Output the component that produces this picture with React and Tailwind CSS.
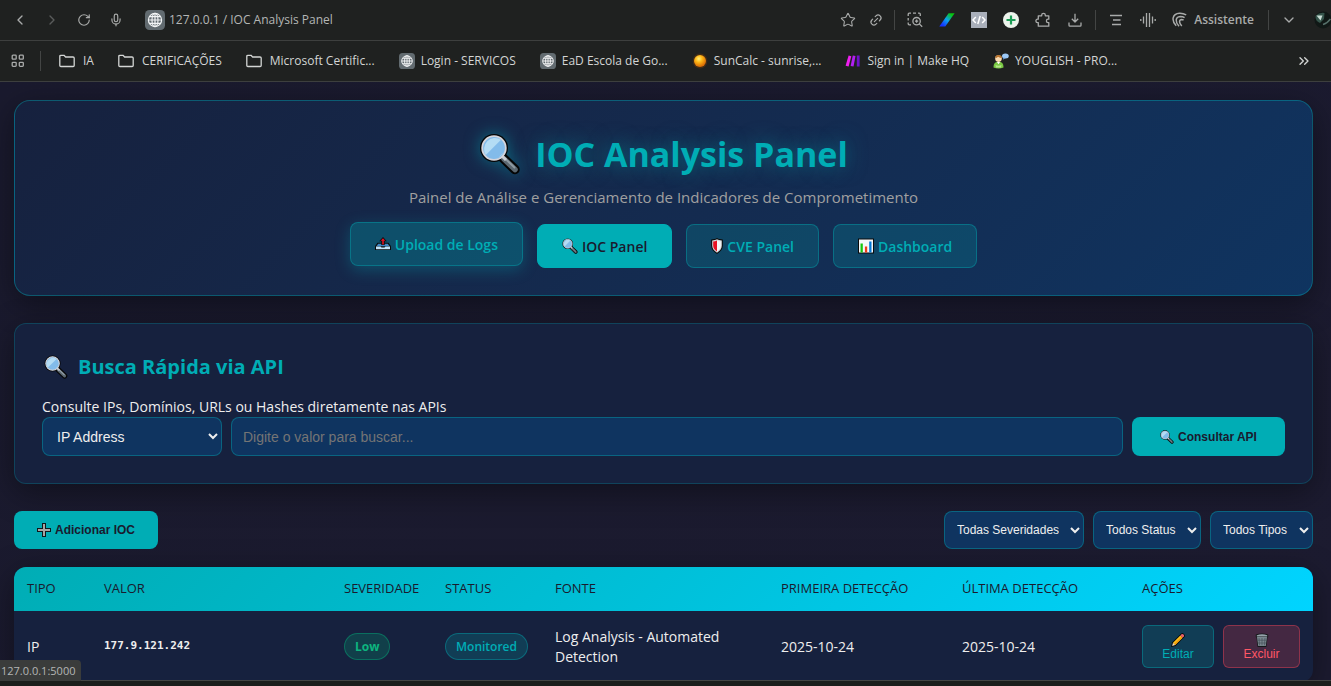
import React from "react";
import {
  ChevronLeft, ChevronRight, ChevronDown, ChevronsRight, RotateCw, Mic, Star, Link2,
} from "lucide-react";

/* ---------- Drawn icons ---------- */

function Magnifier({ className }) {
  return (
    <svg viewBox="0 0 42 42" className={className} aria-hidden="true">
      <path d="M24 25l12 11.500" stroke="#050505" strokeWidth="9.500" strokeLinecap="round" />
      <circle cx="15" cy="15" r="14" fill="#050505" />
      <path d="M25 26l11 10.500" stroke="#5b6770" strokeWidth="5.500" strokeLinecap="round" />
      <path d="M24.500 24l11 10.500" stroke="#8e9aa2" strokeWidth="2" strokeLinecap="round" />
      <path d="M22 22l5 5" stroke="#c9ccd2" strokeWidth="3" />
      <circle cx="15" cy="15" r="11.800" fill="#82bbea" stroke="#d5d5dc" strokeWidth="1.800" />
      <path d="M6.800 22A11 11 0 0 1 22 6.800z" fill="#b4dcf4" />
      <path d="M19 24.800l5.800-5.800a11 11 0 0 1-5.800 5.800z" fill="#a5d1f0" />
    </svg>
  );
}

function Outbox({ className }) {
  return (
    <svg viewBox="0 0 16 16" className={className} aria-hidden="true">
      <path d="M2.500 6.800h11l2.500 3.400v3.900H0v-3.900z" fill="#0a0a0a" />
      <path d="M3.200 7.800h9.600l1.800 2.400H1.400z" fill="#3f86c4" />
      <path d="M1 10.400h4.500l1 1.200h3l1-1.200H15v2.800H1z" fill="#bfe3fa" />
      <path d="M8 1L4.200 5.200h2.100V9h3.400V5.200h2.100z" fill="#0a0a0a" />
      <path d="M8 2.200L5.600 4.700h1.600v3.900h1.600V4.700h1.600z" fill="#e01227" />
    </svg>
  );
}

function Shield({ className }) {
  return (
    <svg viewBox="2 0 12 16" className={className} aria-hidden="true">
      <path d="M8 0C6.400 1 4.500 1.300 2.200 1.400v6.400c0 3.400 2.500 6.200 5.800 8.200 3.300-2 5.800-4.800 5.800-8.200V1.400C11.500 1.300 9.600 1 8 0z" fill="#0a0a0a" />
      <path d="M8 1.200c-1.400.8-3 1.100-4.800 1.200v5.400c0 2.800 2 5.200 4.800 7 2.800-1.800 4.800-4.200 4.800-7V2.400C11 2.300 9.400 2 8 1.200z" fill="#d8dadd" />
      <path d="M8 2.400c-1.200.6-2.400.9-3.800 1v4.400c0 2.300 1.600 4.200 3.800 5.700z" fill="#e81224" />
      <path d="M8 2.400c1.200.6 2.400.9 3.800 1v4.400c0 2.300-1.600 4.200-3.800 5.700z" fill="#f7f7f7" />
    </svg>
  );
}

function Bars({ className }) {
  return (
    <svg viewBox="0 0 16 16" className={className} aria-hidden="true">
      <path d="M0 .5h16v15H0z" fill="#0a0a0a" />
      <path d="M1 1.500h14v13H1z" fill="#f4f6f8" />
      <path d="M2.500 5.500h2.300v9H2.500z" fill="#16c60c" />
      <path d="M6.900 8.500h2.300v6H6.900z" fill="#f03a17" />
      <path d="M11.200 3.500h2.300v11h-2.300z" fill="#0078d7" />
    </svg>
  );
}

function Plus({ className }) {
  return (
    <svg viewBox="0 0 14 14" className={className} aria-hidden="true">
      <path d="M5 0h4v5h5v4H9v5H5V9H0V5h5z" fill="#10181c" />
      <path d="M6 1h2v5h5v2H8v5H6V8H1V6h5z" fill="#a9a5a3" />
    </svg>
  );
}

function Pencil({ className }) {
  return (
    <svg viewBox="0 0 14 14" className={className} aria-hidden="true">
      <path d="M0 14l1-4.500L10.200.4Q11.500-.5 13 1t.6 2.800L4.500 13z" fill="#0a0a0a" />
      <path d="M2 9.800L9.300 2.500l2.200 2.200L4.200 12z" fill="#ffc21a" />
      <path d="M3.100 10.900l7.300-7.300 1.100 1.100L4.200 12z" fill="#f09a0c" />
      <path d="M9.300 2.500l1.500-1.400q.8-.5 1.700.4t.4 1.700l-1.400 1.500z" fill="#e8606a" />
      <path d="M2 9.800L4.200 12l-3 .9z" fill="#f6dcb4" />
    </svg>
  );
}

function Trash({ className }) {
  return (
    <svg viewBox="0 0 14 14" className={className} aria-hidden="true">
      <path d="M.8 1.600Q7-.8 13.200 1.600v2.600h-.6L11.400 14H2.600L1.400 4.200H.8z" fill="#15181a" />
      <path d="M2 4h10l-1.200 9.100H3.200z" fill="#78868e" />
      <path d="M1.800 2.200Q7 .4 12.200 2.200v1.200H1.800z" fill="#94a2aa" />
      <path d="M4 5l.6 7.400M7 5v7.400M10 5l-.6 7.400M2.600 7.200h8.800M3 10h8" stroke="#46525a" strokeWidth=".7" fill="none" />
    </svg>
  );
}

function Globe({ className }) {
  return (
    <svg viewBox="0 0 20 20" className={className} aria-hidden="true">
      <rect width="20" height="20" rx="4.500" fill="#626b70" />
      <g fill="none" stroke="#f2f4f5" strokeWidth="1.200">
        <circle cx="10" cy="10" r="6.600" />
        <ellipse cx="10" cy="10" rx="3" ry="6.600" />
        <path d="M10 3.400v13.200M3.400 10h13.200M4.600 6.600h10.800M4.600 13.400h10.800" />
      </g>
    </svg>
  );
}

function Folder({ className }) {
  return (
    <svg viewBox="0 0 16 16" className={className} fill="none" stroke="currentColor" strokeWidth="1.300" aria-hidden="true">
      <path d="M.8 3.400Q.8 2.300 1.900 2.300H5l1.600 1.700h7.400q1.200 0 1.200 1.100v7.300q0 1.100-1.100 1.100H1.900q-1.100 0-1.100-1.100z" strokeLinejoin="round" />
    </svg>
  );
}

function Sun({ className }) {
  return (
    <svg viewBox="0 0 16 16" className={className} aria-hidden="true">
      <defs>
        <radialGradient id="sun" cx=".4" cy=".32" r=".65">
          <stop offset="0" stopColor="#fff07a" />
          <stop offset=".45" stopColor="#fdb515" />
          <stop offset="1" stopColor="#d96c06" />
        </radialGradient>
      </defs>
      <circle cx="8" cy="8" r="7.400" fill="#7a3f08" opacity=".4" />
      <circle cx="8" cy="8" r="6" fill="url(#sun)" />
    </svg>
  );
}

function Make({ className }) {
  return (
    <svg viewBox="0 0 16 16" className={className} aria-hidden="true">
      <path d="M3.600 2.600l2.700.6L3.600 13.400.6 12.800z" fill="#f01ff0" />
      <path d="M7.800 2.600l2.700.4-2 10.400-2.900-.5z" fill="#b21ff2" />
      <path d="M11.800 2.500h2.800v11h-2.800z" fill="#6d12c9" />
    </svg>
  );
}

function Speaker({ className }) {
  return (
    <svg viewBox="0 0 16 16" className={className} aria-hidden="true">
      <path d="M.5 14.500Q.3 8.800 5.500 8.800t5 5.700q-5 1.800-10 0z" fill="#7ac943" />
      <path d="M2.500 12q3 1.400 6 0l-.6 2.600H3z" fill="#b5e68a" />
      <path d="M3.700 8.800h3.600l-1.800 2.400z" fill="#fff" />
      <circle cx="5.500" cy="5.600" r="3.300" fill="#f8d9b0" />
      <path d="M2.200 5.200q.2-3.200 3.300-3.200t3.300 3.200Q6 4.600 5 3.800 4 5 2.200 5.200z" fill="#b7722c" />
      <ellipse cx="12.400" cy="2.900" rx="3.400" ry="2.500" fill="#9cc8f5" />
      <path d="M10.400 4.500l-.4 2.200 2.600-1.600z" fill="#6ea6e3" />
    </svg>
  );
}

function Apps({ className }) {
  return (
    <svg viewBox="0 0 14 14" className={className} fill="none" stroke="currentColor" strokeWidth="1.300" aria-hidden="true">
      <rect x="1.200" y="1.200" width="4" height="4" rx=".8" />
      <rect x="8.300" y="1.200" width="4" height="4" rx=".8" />
      <rect x="1.200" y="8.300" width="4" height="4" rx=".8" />
      <rect x="8.300" y="8.300" width="4" height="4" rx=".8" />
    </svg>
  );
}

function Capture({ className }) {
  return (
    <svg viewBox="0 0 16 16" className={className} fill="none" stroke="currentColor" strokeWidth="1.300" aria-hidden="true">
      <path d="M1.200 4V2.200q0-1 1-1H4M6 1.200h3M11 1.200h1.300q1 0 1 1V4M1.200 6v2.600M1.200 10.600v1.200q0 1 1 1H4" />
      <circle cx="9.600" cy="9.200" r="3.700" />
      <path d="M12.300 11.900l2.900 2.900M8 9.200h3.200M9.600 7.600v3.200" />
    </svg>
  );
}

function Slash({ className }) {
  return (
    <svg viewBox="0 0 16 16" className={className} aria-hidden="true">
      <defs>
        <linearGradient id="slash" x1="0" y1="1" x2="1" y2="0">
          <stop offset="0.15" stopColor="#1533ff" />
          <stop offset=".5" stopColor="#0aa4f0" />
          <stop offset=".85" stopColor="#08c410" />
        </linearGradient>
      </defs>
      <path d="M.3 14.500L9.600 1.300h6L6.300 14.500z" fill="url(#slash)" />
    </svg>
  );
}

function CodeBox({ className }) {
  return (
    <svg viewBox="0 0 16 16" className={className} aria-hidden="true">
      <path d="M0 0h16v16H0z" fill="#a9afba" />
      <path d="M4.800 5L2 8l2.800 3M11.200 5L14 8l-2.800 3M9.200 4L6.800 12" fill="none" stroke="#fff" strokeWidth="1.500" />
    </svg>
  );
}

function AddCircle({ className }) {
  return (
    <svg viewBox="0 0 16 16" className={className} aria-hidden="true">
      <circle cx="8" cy="8" r="8" fill="#edf4ec" />
      <path d="M8 3.500v9M3.500 8h9" stroke="#1d9d57" strokeWidth="2.200" />
    </svg>
  );
}

function Puzzle({ className }) {
  return (
    <svg viewBox="0 0 16 16" className={className} fill="none" stroke="currentColor" strokeWidth="1.300" strokeLinejoin="round" aria-hidden="true">
      <path d="M3.300 3.800h3.400V3.100a1.800 1.800 0 0 1 3.600 0v.7h3.500v3.400h-.7a1.700 1.700 0 0 0 0 3.400h.7v3.600H3.300v-3.600H2.600a1.700 1.700 0 0 1 0-3.400h.7z" />
    </svg>
  );
}

function DownloadTray({ className }) {
  return (
    <svg viewBox="0 0 14 14" className={className} fill="none" stroke="currentColor" strokeWidth="1.300" strokeLinejoin="round" aria-hidden="true">
      <path d="M7 .8v8M3.800 5.800L7 9l3.200-3.200M1 9.500v2.800q0 .9.900.9h10.200q.9 0 .9-.9V9.500" />
    </svg>
  );
}

function Lines({ className }) {
  return (
    <svg viewBox="0 0 14 14" className={className} stroke="currentColor" strokeWidth="1.300" aria-hidden="true">
      <path d="M1 2.500h12M4 7h7.500M3 11.500h9" />
    </svg>
  );
}

function Wave({ className }) {
  return (
    <svg viewBox="0 0 16 16" className={className} stroke="currentColor" strokeWidth="1.300" aria-hidden="true">
      <path d="M.8 7v2M3.500 4.500v7M6.500 1v14M9.500 1v14M12.500 4.500v7M15.200 7v2" />
    </svg>
  );
}

function Assist({ className }) {
  return (
    <svg viewBox="0 0 16 16" className={className} fill="none" stroke="currentColor" strokeWidth="1.500" aria-hidden="true">
      <path d="M4.200 13.800C-.6 9-.2 1.800 7.600 1.300q3.600-.1 6.600 1.600" />
      <path d="M7 14.200C3 10 3.200 4.800 8.200 4.400q2.600 0 4.400 1.200" />
      <path d="M9.800 14C7 11.200 6.800 8 9.400 7.500q1.200 0 2.200.7" />
    </svg>
  );
}

function Avatar({ className }) {
  return (
    <svg viewBox="0 0 20 20" className={className} aria-hidden="true">
      <circle cx="10" cy="10" r="8.500" fill="#101816" />
      <path d="M2.500 6q4-4 9-3L11 9l-4 4Q2 11 2.500 6z" fill="#35544b" />
      <path d="M3.500 5.500h6L7.500 10.500z" fill="#c9ddd5" />
      <path d="M10 14.500q4-1 7.500-5.500" stroke="#56706a" strokeWidth="1.500" fill="none" />
    </svg>
  );
}

/* ---------- Browser frame ---------- */

function BarButton({ label, narrow, children }) {
  return (
    <button type="button" aria-label={label} className={narrow ? "flex h-8 w-7 shrink-0 items-center justify-center" : "flex h-8 w-8 shrink-0 items-center justify-center"}>
      {children}
    </button>
  );
}

function Divider() {
  return <span className="mx-1 h-5 w-px shrink-0 bg-[#434544]" />;
}

function AddressBar() {
  return (
    <div className="flex h-10 shrink-0 items-center overflow-hidden pl-1 text-[#a9abaa]">
      <BarButton label="Voltar"><ChevronLeft className="size-4" /></BarButton>
      <BarButton label="Avançar"><ChevronRight className="size-4 text-[#5a5c5b]" /></BarButton>
      <BarButton label="Recarregar"><RotateCw className="size-3.5" /></BarButton>
      <BarButton label="Pesquisa por voz"><Mic className="size-3.5" /></BarButton>
      <Globe className="ml-[13px] size-5 shrink-0" />
      <span className="ml-1 text-[12px] whitespace-nowrap text-[#b4b6b5]">127.0.0.1 / IOC Analysis Panel</span>
      <div className="ml-auto flex items-center">
        <BarButton label="Favoritar" narrow><Star className="size-4" strokeWidth={1.6} /></BarButton>
        <BarButton label="Copiar link" narrow><Link2 className="size-3.5 -rotate-45" /></BarButton>
        <Divider />
        <BarButton label="Capturar"><Capture className="size-4" /></BarButton>
        <BarButton label="Extensão de cores"><Slash className="size-4" /></BarButton>
        <BarButton label="Extensão de código"><CodeBox className="size-4" /></BarButton>
        <BarButton label="Adicionar"><AddCircle className="size-4" /></BarButton>
        <BarButton label="Extensões"><Puzzle className="size-4" /></BarButton>
        <BarButton label="Downloads"><DownloadTray className="size-3.5" /></BarButton>
        <Divider />
        <BarButton label="Resumo"><Lines className="size-3.5" /></BarButton>
        <BarButton label="Voz"><Wave className="size-4" /></BarButton>
        <button type="button" className="ml-2 flex shrink-0 items-center gap-1.5 text-[12px] font-semibold">
          <Assist className="size-4" />
          Assistente
        </button>
        <span className="ml-3.5 h-5 w-px shrink-0 bg-[#434544]" />
        <button type="button" aria-label="Mais" className="ml-3 shrink-0"><ChevronDown className="size-4" /></button>
        <button type="button" aria-label="Perfil" className="ml-4 flex w-[18px] shrink-0 overflow-hidden"><Avatar className="size-5 shrink-0" /></button>
      </div>
    </div>
  );
}

const bookmarks = [
  { label: "IA", icon: Folder, folder: true },
  { label: "CERIFICAÇÕES", icon: Folder, folder: true },
  { label: "Microsoft Certific...", icon: Folder, folder: true },
  { label: "Login - SERVICOS", icon: Globe },
  { label: "EaD Escola de Go...", icon: Globe },
  { label: "SunCalc - sunrise,...", icon: Sun },
  { label: "Sign in | Make HQ", icon: Make },
  { label: "YOUGLISH - PRO...", icon: Speaker },
];

function BookmarkBar() {
  return (
    <nav aria-label="Favoritos" className="flex h-[42px] shrink-0 items-center border-y border-[#3d3f3e] pr-3 pl-[11px] text-[12px] text-[#d3d5d4]">
      <button type="button" aria-label="Aplicativos"><Apps className="size-3.5 text-[#a9abaa]" /></button>
      <span className="mr-[18px] ml-[15px] h-5 w-px bg-[#434544]" />
      <div className="flex items-center gap-6">
        {bookmarks.map(({ label, icon: Icon, folder }) => (
          <a key={label} href="#" className={folder ? "flex items-center gap-2 whitespace-nowrap" : "flex items-center gap-1.5 whitespace-nowrap"}>
            <Icon className="size-4 shrink-0" />
            {label}
          </a>
        ))}
      </div>
      <button type="button" aria-label="Mais favoritos" className="mr-[7px] ml-auto"><ChevronsRight className="size-4" /></button>
    </nav>
  );
}

/* ---------- Page ---------- */

const navBase = "flex h-11 items-center gap-1 rounded-lg border px-6 text-[14px] font-semibold whitespace-nowrap";

function Hero() {
  return (
    <header className="rounded-2xl border border-[#00adb5]/40 bg-linear-135 from-[#16213e] to-[#0f3460] px-7 pt-7 pb-[27px] shadow-[0_8px_32px_rgba(0,0,0,0.4)]">
      <h1 className="flex items-center justify-center gap-3.5 text-[34px] leading-[50px] font-bold text-[#00adb5] [text-shadow:0_0_20px_rgba(0,173,181,0.5)]">
        <Magnifier className="size-[42px] drop-shadow-[0_0_8px_rgba(0,173,181,0.5)]" />
        IOC Analysis Panel
      </h1>
      <p className="mt-2 text-center text-[15px] leading-5 text-[#a0a0a0]">
        Painel de Análise e Gerenciamento de Indicadores de Comprometimento
      </p>
      <nav className="mt-[17px] flex justify-center gap-3.5">
        <a href="#" className={navBase + " -translate-y-0.5 border-[#00adb5]/40 bg-[#00adb5]/30 text-[#00adb5] shadow-[0_4px_15px_rgba(0,173,181,0.3)]"}>
          <Outbox className="size-4" />Upload de Logs
        </a>
        <a href="#" aria-current="page" className={navBase + " border-[#00adb5] bg-[#00adb5] text-[#1a1a2e]"}>
          <Magnifier className="size-4" />IOC Panel
        </a>
        <a href="#" className={navBase + " border-[#00adb5]/40 bg-[#00adb5]/20 text-[#00adb5]"}>
          <Shield className="h-4 w-3" />CVE Panel
        </a>
        <a href="#" className={navBase + " border-[#00adb5]/40 bg-[#00adb5]/20 text-[#00adb5]"}>
          <Bars className="size-4" />Dashboard
        </a>
      </nav>
    </header>
  );
}

const control = "rounded-lg border border-[#00adb5]/40 bg-[#0f3460] font-[Liberation_Sans,Arial,sans-serif]";

function QuickSearch() {
  return (
    <section className="mt-[27px] rounded-xl border border-[#00adb5]/25 bg-[#16213e] p-[27px] shadow-[0_8px_32px_rgba(0,0,0,0.4)]">
      <h2 className="flex items-center gap-2 text-[20px] leading-8 font-bold text-[#00adb5]">
        <Magnifier className="mx-0.5 size-6" />
        Busca Rápida via API
      </h2>
      <label htmlFor="query" className="mt-3.5 block text-[14px] leading-5 text-[#eeeeee]">
        Consulte IPs, Domínios, URLs ou Hashes diretamente nas APIs
      </label>
      <div className="flex gap-[9px]">
        <select aria-label="Tipo de consulta" className={control + " h-[39px] w-[180px] px-2.5 text-[14px] text-[#eeeeee]"}>
          <option>IP Address</option>
        </select>
        <input id="query" type="text" placeholder="Digite o valor para buscar..." className={control + " h-[39px] min-w-0 flex-1 px-[11px] text-[14px] text-[#eeeeee] placeholder:text-[#757575]"} />
        <button type="button" className="flex h-[39px] w-[153px] items-center justify-center gap-1 rounded-lg bg-[#00adb5] font-[Liberation_Sans,Arial,sans-serif] text-[12px] font-bold text-[#1a1a2e]">
          <Magnifier className="size-3.5" />Consultar API
        </button>
      </div>
    </section>
  );
}

function Toolbar() {
  return (
    <div className="mt-[27px] flex items-center justify-between">
      <button type="button" className="flex h-[38px] w-36 items-center justify-center gap-1 rounded-lg bg-[#00adb5] font-[Liberation_Sans,Arial,sans-serif] text-[12px] font-bold text-[#1a1a2e]">
        <Plus className="size-3.5" />Adicionar IOC
      </button>
      <div className="flex gap-[9px] text-[12px] text-[#eeeeee]">
        <select aria-label="Severidade" className={control + " h-[38px] w-[140px] px-2"}><option>Todas Severidades</option></select>
        <select aria-label="Status" className={control + " h-[38px] w-[108px] px-2"}><option>Todos Status</option></select>
        <select aria-label="Tipo" className={control + " h-[38px] w-[103px] px-2"}><option>Todos Tipos</option></select>
      </div>
    </div>
  );
}

const columns = ["Tipo", "Valor", "Severidade", "Status", "Fonte", "Primeira Detecção", "Última Detecção", "Ações"];

function IocTable() {
  return (
    <div className="mt-[18px] overflow-hidden rounded-xl bg-[#16213e] shadow-[0_8px_32px_rgba(0,0,0,0.4)]">
      <table className="w-full table-fixed border-collapse text-left text-[14px] text-[#eeeeee]">
        <colgroup>
          <col className="w-[77px]" />
          <col className="w-[240px]" />
          <col className="w-[101px]" />
          <col className="w-[110px]" />
          <col className="w-[226px]" />
          <col className="w-[181px]" />
          <col className="w-[180px]" />
          <col className="w-[184px]" />
        </colgroup>
        <thead className="bg-linear-135 from-[#00adb5] to-[#00d4ff] text-[13px] text-[#1a1a2e] uppercase">
          <tr>
            {columns.map((c) => (
              <th key={c} scope="col" className="h-11 px-[13px] font-medium whitespace-nowrap">{c}</th>
            ))}
          </tr>
        </thead>
        <tbody>
          <tr>
            <td className="h-[71px] px-[13px]">IP</td>
            <td className="px-[13px] font-[DejaVu_Sans_Mono,monospace] text-[11px] font-bold">177.9.121.242</td>
            <td className="px-[13px]">
              <span className="inline-flex h-[27px] items-center rounded-full border border-[#00b87c]/40 bg-[#00b87c]/20 px-2.5 text-[12px] font-bold text-[#0db57f]">Low</span>
            </td>
            <td className="px-[13px]">
              <span className="inline-flex h-[27px] items-center rounded-full border border-[#00adb5]/40 bg-[#00adb5]/20 px-2.5 text-[12px] font-semibold text-[#00adb5]">Monitored</span>
            </td>
            <td className="px-[13px] leading-5">Log Analysis - Automated Detection</td>
            <td className="px-[13px]">2025-10-24</td>
            <td className="px-[13px]">2025-10-24</td>
            <td className="px-[13px]">
              <div className="flex gap-[9px] font-[Liberation_Sans,Arial,sans-serif] text-[12px] leading-3.5">
                <button type="button" className="flex h-[43px] w-[72px] flex-col items-center justify-center rounded-md border border-[#00adb5]/40 bg-[#00adb5]/20 text-[#00adb5]">
                  <Pencil className="size-3.5" />Editar
                </button>
                <button type="button" className="flex h-[43px] w-[77px] flex-col items-center justify-center rounded-md border border-[#ff4757]/40 bg-[#ff4757]/20 text-[#ff5766]">
                  <Trash className="size-3.5" />Excluir
                </button>
              </div>
            </td>
          </tr>
        </tbody>
      </table>
    </div>
  );
}

export default function App() {
  return (
    <div className="relative flex h-screen flex-col overflow-hidden bg-[#1f2120] font-[Open_Sans,Noto_Sans,sans-serif]">
      <AddressBar />
      <BookmarkBar />
      <main className="min-h-0 flex-1 overflow-hidden bg-linear-135 from-[#1a1a2e] to-[#1c1b30] pt-[18px] pr-[18px] pl-3.5">
        <Hero />
        <QuickSearch />
        <Toolbar />
        <IocTable />
      </main>
      <footer className="h-1.5 shrink-0 border-t border-[#434544] bg-[#1b1e1c]" />
      <div className="absolute bottom-[5px] left-0 rounded-tr-sm bg-[#3a3c3b] pr-1.5 pl-px text-[11px] leading-[21px] text-[#b4b6b5]">
        127.0.0.1:5000
      </div>
    </div>
  );
}
